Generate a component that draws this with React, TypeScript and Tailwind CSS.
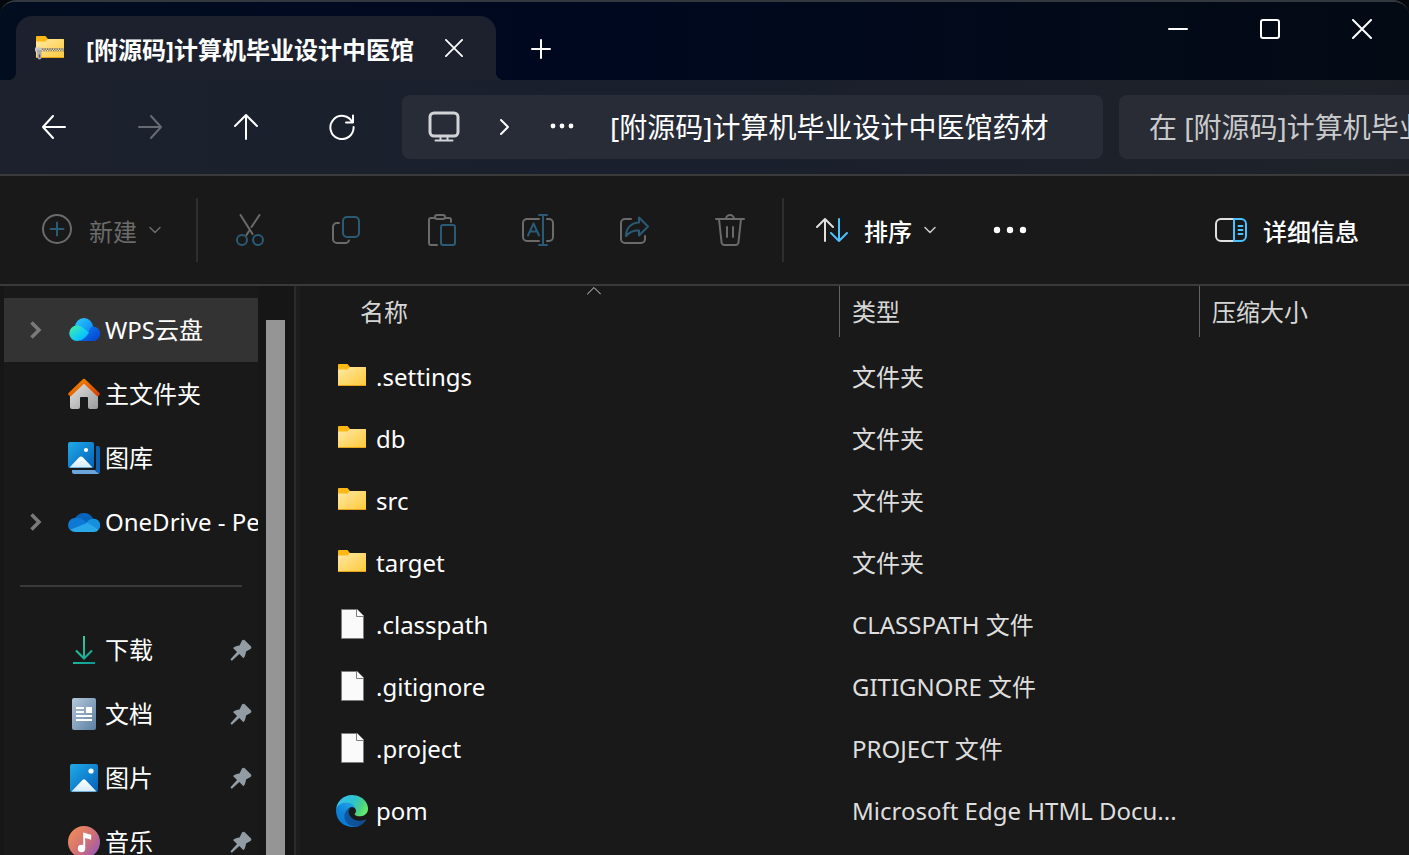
import type { ReactNode } from "react";

type IconProps = { className?: string };

function Stroke({
  size = 32,
  width = 2,
  className,
  children,
}: {
  size?: number;
  width?: number;
  className?: string;
  children: ReactNode;
}) {
  return (
    <svg
      width={size}
      height={size}
      viewBox={`0 0 ${size} ${size}`}
      fill="none"
      stroke="currentColor"
      strokeWidth={width}
      strokeLinecap="round"
      strokeLinejoin="round"
      className={className}
      aria-hidden="true"
    >
      {children}
    </svg>
  );
}

// Shared gradients, referenced by id from the coloured icons
function Gradients() {
  return (
    <svg className="absolute size-0" aria-hidden="true">
      <defs>
        <linearGradient id="folder" x1="0" y1="0" x2="1" y2="1">
          <stop offset="0" stopColor="#ffe9a6" />
          <stop offset="1" stopColor="#ffc938" />
        </linearGradient>
        <linearGradient id="photo" x1="0" y1="0" x2="1" y2="1">
          <stop offset="0" stopColor="#1faae8" />
          <stop offset="1" stopColor="#0660b8" />
        </linearGradient>
        <linearGradient id="snow" x1="0" y1="0" x2="0" y2="1">
          <stop offset="0" stopColor="#ffffff" />
          <stop offset="1" stopColor="#d3ebfa" />
        </linearGradient>
        <linearGradient id="house" x1="0" y1="0" x2="1" y2="1">
          <stop offset="0" stopColor="#e4e4e4" />
          <stop offset="1" stopColor="#9b9b9b" />
        </linearGradient>
        <linearGradient id="roof" x1="0" y1="0" x2="1" y2="1">
          <stop offset="0" stopColor="#f59300" />
          <stop offset="1" stopColor="#d83b01" />
        </linearGradient>
        <linearGradient id="wpsTop" x1="0" y1="0" x2="1" y2="1">
          <stop offset="0" stopColor="#2bd0ff" />
          <stop offset="1" stopColor="#0a78f5" />
        </linearGradient>
        <linearGradient id="wpsLeft" x1="0" y1="0" x2="1" y2="1">
          <stop offset="0" stopColor="#4bf0a0" />
          <stop offset="0.6" stopColor="#0fcdf5" />
          <stop offset="1" stopColor="#0aa5ff" />
        </linearGradient>
        <linearGradient id="wpsRight" x1="0" y1="0" x2="1" y2="1">
          <stop offset="0" stopColor="#0a82f5" />
          <stop offset="1" stopColor="#0540cc" />
        </linearGradient>
        <linearGradient
          id="download"
          gradientUnits="userSpaceOnUse"
          x1="5"
          y1="4"
          x2="27"
          y2="28"
        >
          <stop offset="0" stopColor="#36d693" />
          <stop offset="1" stopColor="#0c9c9a" />
        </linearGradient>
        <linearGradient id="document" x1="0" y1="0" x2="1" y2="1">
          <stop offset="0" stopColor="#b5c8da" />
          <stop offset="1" stopColor="#5b7fa3" />
        </linearGradient>
        <linearGradient id="music" x1="0" y1="0.2" x2="1" y2="1">
          <stop offset="0" stopColor="#f08c58" />
          <stop offset="0.5" stopColor="#cf6f77" />
          <stop offset="1" stopColor="#8a55c8" />
        </linearGradient>
        <linearGradient id="edgeDark" x1="0" y1="0.5" x2="1" y2="0.5">
          <stop offset="0" stopColor="#0c59a4" />
          <stop offset="1" stopColor="#114a8b" />
        </linearGradient>
        <linearGradient id="edgeBlue" x1="0.7" y1="0.2" x2="0.2" y2="1">
          <stop offset="0" stopColor="#1b9de2" />
          <stop offset="0.5" stopColor="#0f80d5" />
          <stop offset="1" stopColor="#0678d4" />
        </linearGradient>
        <linearGradient id="edgeGreen" x1="0" y1="0.2" x2="1" y2="0.6">
          <stop offset="0" stopColor="#35c1f1" />
          <stop offset="0.5" stopColor="#2dc3cf" />
          <stop offset="0.8" stopColor="#4bd183" />
          <stop offset="1" stopColor="#66eb6e" />
        </linearGradient>
      </defs>
    </svg>
  );
}

function FolderIcon() {
  return (
    <svg width="32" height="32" viewBox="0 0 32 32" aria-hidden="true">
      <path d="M2 4a1 1 0 0 1 1-1h8.500l2.500 3H29a1 1 0 0 1 1 1v5H2z" fill="#fdb813" />
      <path d="M2 8.500h9.500L14 6h15a1 1 0 0 1 1 1v17a1 1 0 0 1-1 1H3a1 1 0 0 1-1-1z" fill="url(#folder)" />
      <path d="M2.300 24.500h27.400" stroke="#e8a317" />
    </svg>
  );
}

function ZipFolderIcon() {
  return (
    <svg width="32" height="32" viewBox="0 0 32 32" aria-hidden="true">
      <path d="M4 5a1 1 0 0 1 1-1h8.500L16 7h15a1 1 0 0 1 1 1v5H4z" fill="#fdb813" />
      <path d="M4 9.500h9.500L16 7h15a1 1 0 0 1 1 1v17a1 1 0 0 1-1 1H5a1 1 0 0 1-1-1z" fill="url(#folder)" />
      <path d="M4.300 25.500h27.400" stroke="#e8a317" />
      <path d="M9 17.800h23" stroke="#7d6d45" strokeWidth="3" />
      <path d="M9 17.100h23" stroke="#f3ecd6" strokeWidth="1.200" strokeDasharray="1.200 1.200" />
      <path d="M10.200 18.500h22" stroke="#f3ecd6" strokeWidth="1.200" strokeDasharray="1.200 1.200" />
      <path d="M3 15.500h6.500v4H3z" fill="#c4c4c4" />
      <path d="M5 18h4.500v7.500a2 2 0 0 1-4 0z" fill="#a9a9a9" />
      <path d="M6.800 22.500h1.400v3H6.800z" fill="#565656" />
    </svg>
  );
}

function PageIcon() {
  return (
    <svg width="32" height="32" viewBox="0 0 32 32" aria-hidden="true">
      <path d="M5.500.5h16l6 6v23h-22z" fill="#fafafa" stroke="#7d7d7d" />
      <path d="M20.500.5v7h7" fill="none" stroke="#7d7d7d" />
    </svg>
  );
}

function EdgeIcon() {
  return (
    <svg width="32" height="32" viewBox="0 0 256 256" aria-hidden="true">
      <path
        fill="url(#edgeDark)"
        d="M235.680 195.530c-3.440 1.800-6.980 3.370-10.620 4.730a101.900 101.900 0 0 1-35.770 6.400c-47.140 0-88.200-32.400-88.200-74.050.12-11.400 6.400-21.830 16.400-27.300-42.640 1.790-53.600 46.220-53.600 72.230 0 73.650 67.820 81.080 82.430 81.080 7.870 0 19.740-2.300 26.930-4.560l1.290-.45a128.340 128.340 0 0 0 66.600-52.800 4 4 0 0 0-5.460-5.280z"
      />
      <path
        fill="url(#edgeBlue)"
        d="M105.730 241.420a79.200 79.200 0 0 1-22.740-21.340 81.120 81.120 0 0 1 29.490-120.770c3.120-1.470 8.450-4.130 15.540-4a32.350 32.350 0 0 1 25.690 13 31.880 31.880 0 0 1 6.360 18.660c0-.21 24.460-79.600-80-79.600-43.900 0-80 41.660-80 78.210a130.150 130.150 0 0 0 12.110 56 128 128 0 0 0 156.380 67.110 75.550 75.550 0 0 1-62.780-8z"
      />
      <path
        fill="url(#edgeGreen)"
        d="M152.330 148.860c-.8 1-3.300 2.500-3.300 5.660 0 2.610 1.700 5.120 4.720 7.230 14.380 10 41.490 8.680 41.560 8.680a59.560 59.560 0 0 0 30.270-8.350A61.380 61.380 0 0 0 256 109.200c.26-22.410-8-37.310-11.340-43.910C223.460 23.840 177.720 0 128 0A128 128 0 0 0 0 126.200c.48-36.540 36.800-66.050 80-66.050 3.500 0 23.460.34 42 10.070 16.340 8.580 24.900 18.940 30.850 29.210 6.180 10.670 7.280 24.150 7.280 29.520s-2.740 13.330-7.800 19.910z"
      />
    </svg>
  );
}

function WpsCloudIcon() {
  return (
    <svg width="32" height="32" viewBox="0 0 32 32" aria-hidden="true">
      <circle cx="16" cy="13" r="9" fill="url(#wpsTop)" />
      <path d="M12 27l9-10a7 7 0 0 1 3-4.500A7.300 7.300 0 1 1 24 27z" fill="url(#wpsRight)" />
      <path d="M9 11.500c4.500 0 7.500 3.500 12 7-3.500 5.500-7 8.500-12 8.500a7.750 7.750 0 0 1 0-15.500z" fill="url(#wpsLeft)" />
    </svg>
  );
}

function HomeIcon() {
  return (
    <svg width="32" height="32" viewBox="0 0 32 32" aria-hidden="true">
      <path
        d="M16 4l14 13v12a2 2 0 0 1-2 2h-6a2 2 0 0 1-2-2v-9a1 1 0 0 0-1-1h-6a1 1 0 0 0-1 1v9a2 2 0 0 1-2 2H4a2 2 0 0 1-2-2V17z"
        fill="url(#house)"
      />
      <path
        d="M14.300 1.700a2.400 2.400 0 0 1 3.400 0l14 13.600c.8.8-1.400 3.800-2.800 2.800L16 5.800 3.100 18.100c-1.400 1-3.600-2-2.800-2.800z"
        fill="url(#roof)"
      />
    </svg>
  );
}

function GalleryIcon() {
  return (
    <svg width="32" height="32" viewBox="0 0 32 32" aria-hidden="true">
      <path d="M28 4h2a2 2 0 0 1 2 2v24a2 2 0 0 1-1 1.700L26.500 28a1.500 1.500 0 0 0 1.500-1.500z" fill="#0b62b5" />
      <path d="M4 28h22.500l4.500 3.700-1 .3H6a2 2 0 0 1-2-2z" fill="#6aa5dc" />
      <rect width="26" height="26" rx="2" fill="url(#photo)" />
      <path d="M1.500 25.500l9.500-10a3 3 0 0 1 4 0l9.500 10z" fill="url(#snow)" />
      <circle cx="18" cy="8" r="2.100" fill="#fff" />
    </svg>
  );
}

function OneDriveIcon() {
  return (
    <svg width="32" height="32" viewBox="0 0 32 32" aria-hidden="true">
      <path d="M7 12.500a10.200 10.200 0 0 1 18.500.8L19 19z" fill="#0364b8" />
      <path d="M6.500 12c3-.6 5.700 0 8 1.500l6 3.800L2.500 24.500A7.200 7.200 0 0 1 6.500 12z" fill="#0f78d4" />
      <path d="M18.500 17c1.500-2.800 4-4.200 7-4.200a6.500 6.500 0 0 1 5.200 10.700z" fill="#1490df" />
      <path d="M19.500 16.700l11.300 6.700A6 6 0 0 1 25.500 26H7.500a7 7 0 0 1-5.200-2.200z" fill="#28a8ea" />
    </svg>
  );
}

function DownloadIcon() {
  return (
    <svg width="32" height="32" viewBox="0 0 32 32" fill="none" stroke="url(#download)" strokeWidth="2" aria-hidden="true">
      <path d="M8 16.500l8 8 8-8" />
      <rect x="15" y="2" width="2" height="22" fill="url(#download)" stroke="none" />
      <rect x="5" y="28" width="22" height="2" fill="url(#download)" stroke="none" />
    </svg>
  );
}

function DocumentIcon() {
  return (
    <svg width="32" height="32" viewBox="0 0 32 32" aria-hidden="true">
      <rect x="4" width="24" height="32" rx="2" fill="url(#document)" />
      <path d="M8 10h8M8 14h8M8 18h16M8 22h16" stroke="#fff" strokeWidth="2" />
      <rect x="18" y="9" width="6" height="6" fill="#fff" />
    </svg>
  );
}

function PictureIcon() {
  return (
    <svg width="32" height="32" viewBox="0 0 32 32" aria-hidden="true">
      <rect x="2" y="2" width="28" height="28" rx="2" fill="url(#photo)" />
      <path d="M3.500 29.500l11-11.500a2 2 0 0 1 3 0l11 11.500z" fill="url(#snow)" />
      <circle cx="23" cy="9" r="2.600" fill="#fff" />
    </svg>
  );
}

function MusicIcon() {
  return (
    <svg width="32" height="32" viewBox="0 0 32 32" aria-hidden="true">
      <circle cx="16" cy="16" r="16" fill="url(#music)" />
      <circle cx="13.500" cy="22.500" r="3.700" fill="#fff" />
      <path d="M15.200 6.500c3 .8 5 1.500 8 2.300v5l-6-1.800v10.500h-2z" fill="#fff" />
    </svg>
  );
}

function PinIcon() {
  return (
    <svg width="22" height="22" viewBox="0 0 22 22" className="shrink-0" aria-hidden="true">
      <path
        d="M12 1.500c.8-1 2-1 2.800-.2l6 6c.8.8.7 2-.3 2.600L16 12.500c-.3 2.500-.8 4.800-2.500 6.800l-4.200-4.200-6.800 6.200c-1.200.8-2.300-.4-1.600-1.600L7 13 3 9c2-1.500 4-2.300 6.500-2.500z"
        fill="#929ca4"
      />
    </svg>
  );
}

function CloseIcon({ className }: IconProps) {
  return (
    <Stroke size={20} className={className}>
      <path d="M1 1l18 18M19 1L1 19" />
    </Stroke>
  );
}

function ChevronDown({ className }: IconProps) {
  return (
    <Stroke size={12} width={1.5} className={className}>
      <path d="M1 3.500l5 5 5-5" />
    </Stroke>
  );
}

const tools = [
  {
    label: "剪切",
    icon: (
      <>
        <path d="M6.500 1l12 19M25.500 1L17.500 13M15 17l-2.500 4" />
        <g className="text-[#2b5a75]">
          <circle cx="8" cy="26" r="5" stroke="currentColor" />
          <circle cx="24" cy="26" r="5" stroke="currentColor" />
        </g>
      </>
    ),
  },
  {
    label: "复制",
    icon: (
      <>
        <path d="M9 9H7a4 4 0 0 0-4 4v12a4 4 0 0 0 4 4h8a4 4 0 0 0 4-2.500" />
        <rect x="13" y="3" width="16" height="20" rx="4" className="text-[#2b5a75]" stroke="currentColor" />
      </>
    ),
  },
  {
    label: "粘贴",
    icon: (
      <>
        <path d="M9 4H5a2 2 0 0 0-2 2v23a2 2 0 0 0 2 2h6M19 4h4a2 2 0 0 1 2 2v2" />
        <rect x="9" y="1" width="10" height="4" rx="2" />
        <rect x="15" y="11" width="14" height="20" rx="2" className="text-[#2b5a75]" stroke="currentColor" />
      </>
    ),
  },
  {
    label: "重命名",
    icon: (
      <>
        <path d="M17 5H5a4 4 0 0 0-4 4v14a4 4 0 0 0 4 4h12M25 5h2a4 4 0 0 1 4 4v14a4 4 0 0 1-4 4h-2" />
        <path
          d="M17 1h8M17 31h8M21 1v30M6 21.500L11.500 9.500 17 21.500M8 17.500h7"
          className="text-[#2b5a75]"
          stroke="currentColor"
        />
      </>
    ),
  },
  {
    label: "共享",
    icon: (
      <>
        <path d="M13 5H7a4 4 0 0 0-4 4v16a4 4 0 0 0 4 4h16a4 4 0 0 0 4-4v-3" />
        <path
          d="M21 3.500l9 9-9 9v-5c-6-.5-9.500 1.500-13 5.500 0-7.500 4.500-13 13-13.500z"
          className="text-[#2b5a75]"
          stroke="currentColor"
        />
      </>
    ),
  },
  {
    label: "删除",
    icon: (
      <path d="M2 5h28M5 5l2.500 23a3 3 0 0 0 3 3h11a3 3 0 0 0 3-3L27 5M12 5a4 4 0 0 1 8 0M13 13v10M19 13v10" />
    ),
  },
];

const places = [
  { name: "WPS云盘", icon: <WpsCloudIcon />, expandable: true, selected: true },
  { name: "主文件夹", icon: <HomeIcon /> },
  { name: "图库", icon: <GalleryIcon /> },
  { name: "OneDrive - Personal", icon: <OneDriveIcon />, expandable: true },
];

const pinned = [
  { name: "下载", icon: <DownloadIcon /> },
  { name: "文档", icon: <DocumentIcon /> },
  { name: "图片", icon: <PictureIcon /> },
  { name: "音乐", icon: <MusicIcon /> },
];

const files = [
  { name: ".settings", type: "文件夹", icon: <FolderIcon /> },
  { name: "db", type: "文件夹", icon: <FolderIcon /> },
  { name: "src", type: "文件夹", icon: <FolderIcon /> },
  { name: "target", type: "文件夹", icon: <FolderIcon /> },
  { name: ".classpath", type: "CLASSPATH 文件", icon: <PageIcon /> },
  { name: ".gitignore", type: "GITIGNORE 文件", icon: <PageIcon /> },
  { name: ".project", type: "PROJECT 文件", icon: <PageIcon /> },
  { name: "pom", type: "Microsoft Edge HTML Docu...", icon: <EdgeIcon /> },
];

function TitleBar() {
  return (
    <header className="flex h-[78px] shrink-0 items-end bg-linear-to-r from-[#030d20] via-[#000820] via-40% to-[#040a14]">
      <div className="relative ml-4 flex h-16 w-[480px] shrink-0 items-center rounded-t-2xl bg-[#1c212d] pl-4">
        <span className="absolute -left-2 bottom-0 size-2 bg-[radial-gradient(circle_at_0_0,transparent_8px,#1c212d_8px)]" />
        <span className="absolute -right-2 bottom-0 size-2 bg-[radial-gradient(circle_at_100%_0,transparent_8px,#1c212d_8px)]" />
        <ZipFolderIcon />
        <span className="ml-[22px] grow whitespace-nowrap pt-1 text-2xl font-bold">
          [附源码]计算机毕业设计中医馆
        </span>
        <button type="button" aria-label="关闭标签页" className="mr-[22px] flex size-10 items-center justify-center">
          <CloseIcon className="size-[18px]" />
        </button>
      </div>
      <button type="button" aria-label="新建标签页" className="ml-6 flex h-16 w-[42px] items-center justify-center pt-0.5">
        <Stroke size={20}>
          <path d="M10 1v18M1 10h18" />
        </Stroke>
      </button>
      <div className="ml-auto mr-px flex self-start">
        <button type="button" aria-label="最小化" className="flex h-[54px] w-[92px] items-center justify-center">
          <Stroke size={20}>
            <path d="M1 10h18" />
          </Stroke>
        </button>
        <button type="button" aria-label="最大化" className="flex h-[54px] w-[92px] items-center justify-center">
          <Stroke size={20}>
            <rect x="1" y="1" width="18" height="18" rx="2" />
          </Stroke>
        </button>
        <button type="button" aria-label="关闭" className="flex h-[54px] w-[92px] items-center justify-center">
          <CloseIcon />
        </button>
      </div>
    </header>
  );
}

function NavigationBar() {
  return (
    <div className="flex h-24 shrink-0 items-center overflow-hidden border-b-2 border-[#3a3a3a] bg-linear-to-r from-[#1c212d] via-[#1a1f2d] to-[#1e2228] pl-1.5">
      <div className="flex">
        <button type="button" aria-label="后退" className="flex h-16 w-24 items-center justify-center">
          <Stroke size={24}>
            <path d="M23 12H1M11 1L1 12l10 11" />
          </Stroke>
        </button>
        <button type="button" aria-label="前进" disabled className="flex h-16 w-24 items-center justify-center text-[#666a73]">
          <Stroke size={24}>
            <path d="M1 12h22M13 1l10 11-10 11" />
          </Stroke>
        </button>
        <button type="button" aria-label="向上" className="flex h-16 w-24 items-center justify-center">
          <Stroke size={26}>
            <path d="M13 25V1M2 12L13 1l11 11" />
          </Stroke>
        </button>
        <button type="button" aria-label="刷新" className="flex h-16 w-24 items-center justify-center">
          <Stroke size={26}>
            <path d="M23.500 8.500A11.600 11.600 0 1 0 24.600 13M24 1.500v7h-7" />
          </Stroke>
        </button>
      </div>
      <nav
        aria-label="地址"
        className="ml-3 flex h-16 min-w-0 flex-1 items-center rounded-lg bg-[#282c37] pl-[26px]"
      >
        <Stroke width={3} className="text-[#d2d3d6]">
          <rect x="2" y="2" width="28" height="23" rx="4" />
          <path d="M12.500 25v4M19.500 25v4M7.500 29.500h17" strokeWidth="2" />
        </Stroke>
        <Stroke size={20} className="ml-[34px]">
          <path d="M7 3l7 7-7 7" />
        </Stroke>
        <button type="button" aria-label="更多路径" className="ml-9 flex w-6 justify-center">
          <svg width="24" height="8" viewBox="0 0 24 8" fill="currentColor" aria-hidden="true">
            <circle cx="3" cy="3" r="2.400" />
            <circle cx="12" cy="3" r="2.400" />
            <circle cx="21" cy="3" r="2.400" />
          </svg>
        </button>
        <a href="#path" className="ml-9 truncate text-[28px] leading-10">
          [附源码]计算机毕业设计中医馆药材
        </a>
      </nav>
      <input
        type="text"
        aria-label="搜索"
        placeholder="在 [附源码]计算机毕业设计中医馆药材 中搜索"
        className="ml-4 h-16 w-[290px] shrink-0 rounded-l-lg bg-[#292c34] pl-[30px] text-[28px] placeholder:text-[#c9cacc]"
      />
    </div>
  );
}

function Toolbar() {
  return (
    <div role="toolbar" aria-label="命令" className="flex h-[110px] shrink-0 items-center border-b-2 border-[#3a3a3a] bg-[#191919]">
      <button type="button" disabled className="ml-[41px] flex items-center text-[#6b6b6b]">
        <Stroke>
          <circle cx="16" cy="15" r="14" />
          <path d="M16 8.500v13M9.500 15h13" className="text-[#2b5a75]" stroke="currentColor" />
        </Stroke>
        <span className="ml-4 pt-1 text-2xl">新建</span>
        <ChevronDown className="ml-3" />
      </button>
      <div className="ml-[35px] h-16 w-0.5 bg-[#2e2e2e]" />
      <div className="ml-1 flex">
        {tools.map((tool) => (
          <button
            key={tool.label}
            type="button"
            disabled
            aria-label={tool.label}
            className="flex h-16 w-24 items-center justify-center text-[#6b6b6b]"
          >
            <Stroke>{tool.icon}</Stroke>
          </button>
        ))}
      </div>
      <div className="ml-1 h-16 w-0.5 bg-[#2e2e2e]" />
      <button type="button" className="ml-8 flex items-center">
        <Stroke className="text-[#e0e0e0]">
          <path d="M9 27V5M1 13l8-8 8 8" />
          <path d="M23 5v22M15 19l8 8 8-8" className="text-[#4cc2ff]" stroke="currentColor" />
        </Stroke>
        <span className="ml-4 pt-1 text-2xl font-medium">排序</span>
        <ChevronDown className="ml-3 text-[#cccccc]" />
      </button>
      <button type="button" aria-label="查看更多" className="ml-14 flex h-16 w-9 items-center justify-center">
        <svg width="34" height="8" viewBox="0 0 34 8" fill="currentColor" aria-hidden="true">
          <circle cx="4" cy="4" r="3.200" />
          <circle cx="17" cy="4" r="3.200" />
          <circle cx="30" cy="4" r="3.200" />
        </svg>
      </button>
      <button type="button" className="ml-auto mr-[50px] flex items-center">
        <Stroke>
          <path d="M19 5H6a5 5 0 0 0-5 5v12a5 5 0 0 0 5 5h13" stroke="#e0e0e0" />
          <path d="M19 5h7a5 5 0 0 1 5 5v12a5 5 0 0 1-5 5h-7zM23.500 12h4M23.500 16h4M23.500 20h4" className="text-[#4cc2ff]" stroke="currentColor" />
        </Stroke>
        <span className="ml-4 pt-1 text-2xl font-medium">详细信息</span>
      </button>
    </div>
  );
}

function Sidebar() {
  return (
    <aside className="flex w-[296px] shrink-0 overflow-hidden border-r-2 border-[#2b2b2b] bg-[#161616]">
      <nav aria-label="导航窗格" className="ml-1 w-[254px] shrink-0 bg-[#191919] pt-3">
        <ul>
          {places.map((place) => (
            <li key={place.name}>
              <a
                href="#place"
                className={`flex h-16 items-center overflow-hidden whitespace-nowrap text-2xl ${
                  place.selected ? "bg-[#333333]" : ""
                }`}
              >
                <span className="flex w-16 shrink-0 justify-center text-[#7a7a7a]">
                  {place.expandable && (
                    <svg width="12" height="18" viewBox="0 0 12 18" fill="none" stroke="currentColor" strokeWidth="3.500" aria-hidden="true">
                      <path d="M1.500 1.500L9 9l-7.500 7.500" />
                    </svg>
                  )}
                </span>
                <span className="shrink-0">{place.icon}</span>
                <span className="ml-[5px]">{place.name}</span>
              </a>
            </li>
          ))}
        </ul>
        <div className="flex h-16 items-center px-4">
          <hr className="w-full border-t-2 border-[#3a3a3a]" />
        </div>
        <ul>
          {pinned.map((place) => (
            <li key={place.name}>
              <a href="#place" className="flex h-16 items-center pl-16 pr-1.5 text-2xl">
                {place.icon}
                <span className="ml-[5px] grow">{place.name}</span>
                <PinIcon />
              </a>
            </li>
          ))}
        </ul>
      </nav>
      <div className="ml-2 mt-[34px] w-[19px] bg-[#959595]" />
    </aside>
  );
}

function FileList() {
  return (
    <main className="min-w-0 flex-1 overflow-hidden border-l-4 border-[#1d1d1d] bg-[#191919]">
      <table className="w-full table-fixed text-left text-2xl">
        <thead className="text-[#d6d6d6]">
          <tr className="h-[60px] align-top">
            <th className="w-[539px] pl-[46px] font-normal">
              <div className="relative h-[51px] pl-[14px] leading-[52px]">
                名称
                <Stroke size={14} width={1} className="absolute left-1/2 top-0 -ml-1.5">
                  <path d="M.5 8L7 1.500 13.500 8" />
                </Stroke>
              </div>
            </th>
            <th className="w-[360px] font-normal">
              <div className="h-[51px] border-l border-[#636363] pl-3 leading-[52px]">类型</div>
            </th>
            <th className="font-normal">
              <div className="h-[51px] border-l border-[#636363] pl-3 leading-[52px]">压缩大小</div>
            </th>
          </tr>
        </thead>
        <tbody>
          {files.map((file) => (
            <tr key={file.name} className="h-[62px]">
              <td className="pl-9">
                <div className="flex items-center gap-2">
                  {file.icon}
                  {file.name}
                </div>
              </td>
              <td className="whitespace-nowrap pl-[13px] text-[#dedede]">{file.type}</td>
              <td />
            </tr>
          ))}
        </tbody>
      </table>
    </main>
  );
}

export default function App() {
  return (
    <div className="h-screen overflow-hidden bg-[#05080c]">
      <Gradients />
      <div className="flex h-full flex-col overflow-hidden rounded-t-2xl border-t-2 border-[#33383f] font-['Noto_Sans','Noto_Sans_CJK_SC',sans-serif] text-white">
        <TitleBar />
        <NavigationBar />
        <Toolbar />
        <div className="flex min-h-0 flex-1">
          <Sidebar />
          <FileList />
        </div>
      </div>
    </div>
  );
}
